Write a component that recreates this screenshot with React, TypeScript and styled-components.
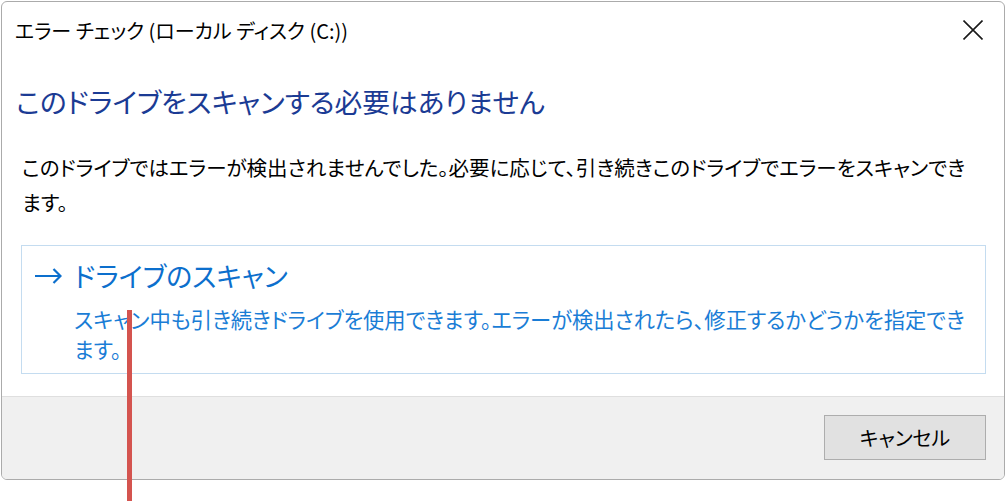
import React from 'react';
import styled, { createGlobalStyle } from 'styled-components';

const GlobalStyle = createGlobalStyle`
  html, body {
    margin: 0;
    padding: 0;
    background: #fff;
  }
  body {
    font-family: "Noto Sans CJK JP", "Noto Sans", sans-serif;
    font-feature-settings: "palt";
  }
`;

const Page = styled.div`
  position: relative;
  width: 1007px;
  height: 501px;
  padding: 1px;
  box-sizing: border-box;
  background: #fff;
`;

const Window = styled.div`
  width: 1004px;
  height: 479px;
  box-sizing: border-box;
  border: 1px solid #ababab;
  border-radius: 6px;
  display: flex;
  flex-direction: column;
  overflow: hidden;
  background: #fff;
`;

const TitleBar = styled.div`
  height: 56px;
  flex: none;
  display: flex;
  align-items: center;
  justify-content: space-between;
  padding: 0 21px 0 13px;
  font-size: 20px;
  color: #000;
`;

const CloseButton = styled.button`
  width: 20px;
  height: 20px;
  padding: 0;
  border: none;
  background: none;
  display: flex;
  align-items: center;
  justify-content: center;
`;

const Main = styled.div`
  flex: 1;
  display: flex;
  flex-direction: column;
  padding: 0 18px 0 14px;
`;

const Heading = styled.h1`
  margin: 23px 0 0;
  font-size: 27.7px;
  font-weight: normal;
  line-height: 40px;
  color: #1b3b94;
`;

const Body = styled.p`
  margin: 29px 0 0;
  padding: 0 8px 0 6px;
  font-size: 20.5px;
  line-height: 35px;
  color: #000;
`;

const Card = styled.div`
  margin: 25px 0 0 5px;
  height: 129px;
  box-sizing: border-box;
  border: 1px solid #c4dcf0;
  padding: 10px 18px 9px 12px;
  display: flex;
  flex-direction: column;
`;

const CardHeader = styled.div`
  display: flex;
  align-items: center;
  gap: 12px;
  height: 40px;
`;

const CardTitle = styled.span`
  font-size: 27px;
  line-height: 40px;
  color: #0c6fcd;
`;

const CardText = styled.p`
  margin: 8px 0 0 40px;
  font-size: 21.3px;
  line-height: 30px;
  color: #1a7dd6;
`;

const Footer = styled.div`
  height: 83px;
  flex: none;
  box-sizing: border-box;
  border-top: 1px solid #dfdfdf;
  background: #f0f0f0;
  display: flex;
  justify-content: flex-end;
  align-items: flex-start;
  padding: 18px 18px 0 0;
`;

const Button = styled.button`
  width: 162px;
  height: 45px;
  box-sizing: border-box;
  border: 1px solid #adadad;
  background: #e1e1e1;
  font-family: inherit;
  font-feature-settings: "palt";
  font-size: 20px;
  color: #000;
  padding: 0;
`;

const Marker = styled.div`
  position: absolute;
  left: 127px;
  top: 310px;
  width: 5px;
  height: 191px;
  background: #d4544f;
`;

const Arrow = () => (
  <svg width="28" height="16" viewBox="0 0 28 16" fill="none" stroke="#0c6fcd" strokeWidth="2.2">
    <path d="M1 8 H26.5" />
    <path d="M19.5 1 L26.5 8 L19.5 15" />
  </svg>
);

const CloseIcon = () => (
  <svg width="20" height="20" viewBox="0 0 20 20" fill="none" stroke="#1a1a1a" strokeWidth="1.6">
    <path d="M0.5 0.5 L19.5 19.5 M19.5 0.5 L0.5 19.5" />
  </svg>
);

export default function App() {
  return (
    <>
      <GlobalStyle />
      <Page>
        <Window>
          <TitleBar>
            <span>エラー チェック (ローカル ディスク (C:))</span>
            <CloseButton aria-label="閉じる">
              <CloseIcon />
            </CloseButton>
          </TitleBar>
          <Main>
            <Heading>このドライブをスキャンする必要はありません</Heading>
            <Body>
              このドライブではエラーが検出されませんでした。必要に応じて、引き続きこのドライブでエラーをスキャンできます。
            </Body>
            <Card>
              <CardHeader>
                <Arrow />
                <CardTitle>ドライブのスキャン</CardTitle>
              </CardHeader>
              <CardText>
                スキャン中も引き続きドライブを使用できます。エラーが検出されたら、修正するかどうかを指定できます。
              </CardText>
            </Card>
          </Main>
          <Footer>
            <Button>キャンセル</Button>
          </Footer>
        </Window>
        <Marker />
      </Page>
    </>
  );
}
